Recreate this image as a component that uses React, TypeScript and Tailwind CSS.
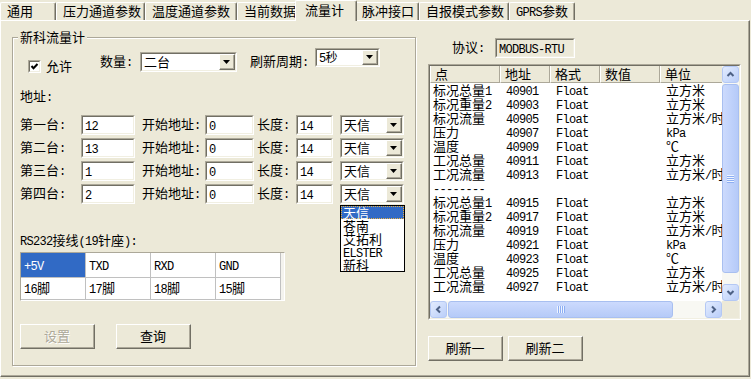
import React from "react";

const MONO = "font-['Liberation_Mono','Noto_Sans_CJK_SC',monospace] text-[12px] tracking-[-0.7px]";

function T({ s }: { s: string }) {
  const parts = s.split(/([\x20-\x7e]+)/).filter((p) => p !== "");
  return (
    <>
      {parts.map((p, i) =>
        /^[\x20-\x7e]+$/.test(p) ? (
          <span key={i} className={MONO}>
            {p}
          </span>
        ) : (
          <span key={i}>{p}</span>
        )
      )}
    </>
  );
}

function Sunken({ cls, inner, children }: { cls: string; inner: string; children?: React.ReactNode }) {
  return (
    <div className={"shrink-0 border border-t-[#ACA899] border-l-[#ACA899] border-b-white border-r-white " + cls}>
      <div className={"h-full w-full border border-t-[#716F64] border-l-[#716F64] border-b-[#F1EFE2] border-r-[#F1EFE2] " + inner}>
        {children}
      </div>
    </div>
  );
}

function Raised({ cls, inner, children }: { cls: string; inner: string; children?: React.ReactNode }) {
  return (
    <div className={"shrink-0 border border-t-white border-l-white border-b-[#716F64] border-r-[#716F64] bg-[#ECE9D8] " + cls}>
      <div className={"h-full w-full border-b border-r border-b-[#ACA899] border-r-[#ACA899] " + inner}>{children}</div>
    </div>
  );
}

function Arrow() {
  return (
    <Raised cls="w-[16px] h-full" inner="flex items-center justify-center">
      <svg width="7" height="4" viewBox="0 0 7 4">
        <polygon points="0,0 7,0 3.5,4" fill="#000" />
      </svg>
    </Raised>
  );
}

function Combo({ cls, text, small }: { cls: string; text: string; small?: boolean }) {
  return (
    <Sunken cls={cls} inner="flex bg-white">
      <div
        className={
          small
            ? "flex-1 pl-[2px] text-[12px] leading-[13px] whitespace-nowrap overflow-hidden"
            : "flex-1 pl-[2px] leading-[16px] whitespace-nowrap overflow-hidden"
        }
      >
        <T s={text} />
      </div>
      <Arrow />
    </Sunken>
  );
}

function Input({ cls, v }: { cls: string; v: string }) {
  return (
    <Sunken cls={cls + " h-[20px]"} inner="bg-white pl-[2px] leading-[16px]">
      <T s={v} />
    </Sunken>
  );
}

function Button({ cls, label, disabled }: { cls: string; label: string; disabled?: boolean }) {
  return (
    <Raised cls={cls + " h-[25px]"} inner="flex items-center justify-center">
      <span className={disabled ? "text-[#ACA899] [text-shadow:1px_1px_0_#fff]" : "text-black"}>{label}</span>
    </Raised>
  );
}

function Checkbox({ cls }: { cls: string }) {
  return (
    <Sunken cls={cls + " w-[13px] h-[13px]"} inner="bg-white flex items-center justify-center">
      <svg width="9" height="9" viewBox="0 0 9 9">
        <polyline points="1.5,4 3.5,6.2 7.5,2" fill="none" stroke="#000" strokeWidth="2" />
      </svg>
    </Sunken>
  );
}

const tabs: { t: string; w: string; sel?: boolean }[] = [
  { t: "通用", w: "w-[56px]" },
  { t: "压力通道参数", w: "w-[89px]" },
  { t: "温度通道参数", w: "w-[92px]" },
  { t: "当前数据", w: "w-[60px]" },
  { t: "流量计", w: "w-[62px]", sel: true },
  { t: "脉冲接口", w: "w-[64px]" },
  { t: "自报模式参数", w: "w-[90px]" },
  { t: "GPRS参数", w: "w-[66px]" },
];

function Tabs() {
  return (
    <div className="relative z-10 h-[20px] flex items-end">
      {tabs.map((tb, i) =>
        tb.sel ? (
          <div
            key={i}
            className={
              tb.w +
              " relative z-10 -mx-[2px] -mb-[1px] h-[21px] shrink-0 bg-[#ECE9D8] border-t border-l border-r border-t-white border-l-white border-r-[#716F64] rounded-tl-[2px] rounded-tr-[2px] shadow-[inset_-1px_0_0_#ACA899] pl-[9px] pt-[2px] leading-[14px] whitespace-nowrap"
            }
          >
            <T s={tb.t} />
          </div>
        ) : (
          <div
            key={i}
            className={
              tb.w +
              " h-[18px] shrink-0 border-t border-l border-r border-t-white border-l-white border-r-[#716F64] rounded-tl-[2px] rounded-tr-[2px] shadow-[inset_-1px_0_0_#ACA899] pl-[6px] pt-[1px] leading-[14px] whitespace-nowrap"
            }
          >
            <T s={tb.t} />
          </div>
        )
      )}
    </div>
  );
}

const devRows = [
  { l: "第一台:", a: "12" },
  { l: "第二台:", a: "13" },
  { l: "第三台:", a: "1" },
  { l: "第四台:", a: "2" },
];

function LeftGroup() {
  return (
    <div className="relative w-[404px] h-[329px] shrink-0 border border-[#ACA899] shadow-[inset_1px_1px_0_#fff,1px_1px_0_#fff]">
      <div className="absolute left-[5px] -top-[8px] px-[2px] bg-[#ECE9D8] leading-[14px] whitespace-nowrap">新科流量计</div>

      <div className="flex items-start mt-[10px] h-[25px]">
        <div className="w-[15px] shrink-0" />
        <Checkbox cls="mt-[12px]" />
        <div className="ml-[5px] mt-[11px] w-[54px] shrink-0">允许</div>
        <div className="mt-[6px] w-[40px] shrink-0 whitespace-nowrap">
          <T s="数量:" />
        </div>
        <Combo cls="mt-[4px] w-[97px] h-[20px]" text="二台" />
        <div className="w-[13px] shrink-0" />
        <div className="mt-[6px] w-[65px] shrink-0 whitespace-nowrap">
          <T s="刷新周期:" />
        </div>
        <Combo cls="w-[65px] h-[19px]" text="5秒" small />
      </div>

      <div className="mt-[16px] pl-[7px] leading-[14px]">
        <T s="地址:" />
      </div>

      <div className="mt-[10px] flex flex-col gap-[3px]">
        {devRows.map((r, i) => (
          <div key={i} className="flex items-start h-[20px] pl-[7px]">
            <div className="w-[61px] shrink-0 leading-[18px] whitespace-nowrap">
              <T s={r.l} />
            </div>
            <Input cls="w-[54px]" v={r.a} />
            <div className="ml-[7px] w-[63px] shrink-0 leading-[18px] whitespace-nowrap">
              <T s="开始地址:" />
            </div>
            <Input cls="w-[49px]" v="0" />
            <div className="ml-[3px] w-[39px] shrink-0 leading-[18px] whitespace-nowrap">
              <T s="长度:" />
            </div>
            <Input cls="w-[37px]" v="14" />
            <Combo cls="ml-[7px] w-[64px] h-[20px]" text="天信" />
          </div>
        ))}
      </div>

      <div className="mt-[29px] pl-[7px] leading-[14px] whitespace-nowrap">
        <T s="RS232接线(19针座):" />
      </div>

      <div className="ml-[7px] mt-[3px] w-[265px] h-[49px] border border-t-[#ACA899] border-l-[#ACA899] border-b-white border-r-white bg-[#F4F3EE]">
        <div className="flex h-[25px]">
          <div className="w-[65px] shrink-0 bg-[#316AC5] text-white border-r border-b border-[#C0C0C0] pl-[3px] pt-[5px] leading-[14px]">
            <T s="+5V" />
          </div>
          {["TXD", "RXD", "GND"].map((h) => (
            <div key={h} className="w-[65px] shrink-0 bg-white border-r border-b border-[#C0C0C0] pl-[3px] pt-[5px] leading-[14px]">
              <T s={h} />
            </div>
          ))}
        </div>
        <div className="flex h-[22px]">
          {["16脚", "17脚", "18脚", "15脚"].map((h) => (
            <div key={h} className="w-[65px] shrink-0 bg-white border-r border-b border-[#C0C0C0] pl-[3px] pt-[3px] leading-[14px]">
              <T s={h} />
            </div>
          ))}
        </div>
      </div>

      <div className="mt-[23px] pl-[7px] flex">
        <Button cls="w-[75px]" label="设置" disabled />
        <Button cls="ml-[21px] w-[75px]" label="查询" />
      </div>

      <div className="absolute left-[327px] top-[167px] z-20 w-[65px] h-[67px] border border-black bg-white leading-[13px]">
        <div className="h-[13px] bg-[#316AC5] text-white border border-dotted border-[#E8B040] pl-[1px] leading-[11px]">天信</div>
        <div className="h-[13px] pl-[2px]">苍南</div>
        <div className="h-[13px] pl-[2px]">艾拓利</div>
        <div className="h-[13px] pl-[2px]">
          <T s="ELSTER" />
        </div>
        <div className="h-[13px] pl-[2px]">新科</div>
      </div>
    </div>
  );
}

const dataRows: string[][] = [
  ["标况总量1", "40901", "Float", "", "立方米"],
  ["标况重量2", "40903", "Float", "", "立方米"],
  ["标况流量", "40905", "Float", "", "立方米/时"],
  ["压力", "40907", "Float", "", "kPa"],
  ["温度", "40909", "Float", "", "℃"],
  ["工况总量", "40911", "Float", "", "立方米"],
  ["工况流量", "40913", "Float", "", "立方米/时"],
  ["--------", "", "", "", ""],
  ["标况总量1", "40915", "Float", "", "立方米"],
  ["标况重量2", "40917", "Float", "", "立方米"],
  ["标况流量", "40919", "Float", "", "立方米/时"],
  ["压力", "40921", "Float", "", "kPa"],
  ["温度", "40923", "Float", "", "℃"],
  ["工况总量", "40925", "Float", "", "立方米"],
  ["工况流量", "40927", "Float", "", "立方米/时"],
  ["--------", "", "", "", ""],
];

const colW = ["w-[70px]", "w-[50px]", "w-[50px]", "w-[60px]", "w-[80px]"];
const heads = ["点", "地址", "格式", "数值", "单位"];

function SBtn({ d }: { d: string }) {
  return (
    <div className="w-[17px] h-[17px] shrink-0 rounded-[3px] border border-[#B4C8F4] bg-gradient-to-br from-[#E3ECFE] to-[#BACEF9] flex items-center justify-center">
      <svg width="9" height="9" viewBox="0 0 9 9">
        <path d={d} stroke="#4D6185" strokeWidth="2" fill="none" />
      </svg>
    </div>
  );
}

function VThumb() {
  return (
    <div className="mt-[1px] h-[189px] w-[17px] rounded-[3px] border border-[#A8BFF0] bg-gradient-to-r from-[#CCDAFD] to-[#B5CAF8] flex flex-col items-center justify-center gap-[1px]">
      {[0, 1, 2, 3].map((i) => (
        <div key={i} className="w-[7px] h-[1px] bg-[#EEF4FF] shadow-[0_1px_0_#8DAEF3]" />
      ))}
    </div>
  );
}

function HThumb() {
  return (
    <div className="ml-[1px] w-[225px] h-[17px] rounded-[3px] border border-[#A8BFF0] bg-gradient-to-b from-[#CCDAFD] to-[#B5CAF8] flex items-center justify-center gap-[1px]">
      {[0, 1, 2, 3].map((i) => (
        <div key={i} className="h-[7px] w-[1px] bg-[#EEF4FF] shadow-[1px_0_0_#8DAEF3]" />
      ))}
    </div>
  );
}

function RightCol() {
  return (
    <div className="ml-[12px] w-[313px] shrink-0 flex flex-col">
      <div className="mt-[1px] flex items-center h-[20px]">
        <div className="pl-[24px] w-[67px] shrink-0 whitespace-nowrap">
          <T s="协议:" />
        </div>
        <Sunken cls="w-[80px] h-[20px]" inner="bg-[#ECE9D8] pl-[2px] leading-[16px]">
          <T s="MODBUS-RTU" />
        </Sunken>
      </div>

      <Sunken cls="mt-[6px] w-[313px] h-[256px]" inner="flex flex-col bg-white">
        <div className="flex h-[235px]">
          <div className="w-[292px] h-full overflow-hidden bg-white">
            <div className="flex h-[17px] w-[310px]">
              {heads.map((h, i) => (
                <div
                  key={h}
                  className={
                    colW[i] +
                    " shrink-0 h-[17px] bg-[#ECE9D8] border-l border-l-white border-r border-r-[#ACA899] border-b border-b-[#ACA899] pl-[4px] leading-[16px] whitespace-nowrap"
                  }
                >
                  {h}
                </div>
              ))}
            </div>
            {dataRows.map((r, ri) => (
              <div key={ri} className="flex h-[14px] leading-[14px] w-[310px]">
                {r.map((c, ci) => (
                  <div
                    key={ci}
                    className={
                      colW[ci] +
                      (ci === 0 ? " pl-[3px] overflow-visible" : " pl-[6px] overflow-hidden") +
                      " shrink-0 whitespace-nowrap"
                    }
                  >
                    <T s={c} />
                  </div>
                ))}
              </div>
            ))}
          </div>
          <div className="w-[17px] h-full flex flex-col bg-[#F8F8F3]">
            <SBtn d="M1.5 6 L4.5 3 L7.5 6" />
            <VThumb />
            <div className="flex-1" />
            <SBtn d="M1.5 3 L4.5 6 L7.5 3" />
          </div>
        </div>
        <div className="flex h-[17px]">
          <div className="w-[292px] h-full flex bg-[#F8F8F3]">
            <SBtn d="M6 1.5 L3 4.5 L6 7.5" />
            <HThumb />
            <div className="flex-1" />
            <SBtn d="M3 1.5 L6 4.5 L3 7.5" />
          </div>
          <div className="w-[17px] h-full bg-[#ECE9D8]" />
        </div>
      </Sunken>

      <div className="mt-[16px] flex">
        <Button cls="w-[75px]" label="刷新一" />
        <Button cls="ml-[5px] w-[75px]" label="刷新二" />
      </div>
    </div>
  );
}

export default function App() {
  return (
    <div className="w-[751px] h-[379px] bg-[#ECE9D8] text-black text-[13px] leading-[14px] font-['Noto_Sans_CJK_SC',sans-serif] overflow-hidden select-none">
      <Tabs />
      <div className="w-[750px] h-[357px] border border-t-white border-l-white border-r-[#716F64] border-b-[#716F64]">
        <div className="h-full w-full border-r border-b border-r-[#ACA899] border-b-[#ACA899] flex pl-[11px] pt-[16px]">
          <LeftGroup />
          <RightCol />
        </div>
      </div>
    </div>
  );
}
